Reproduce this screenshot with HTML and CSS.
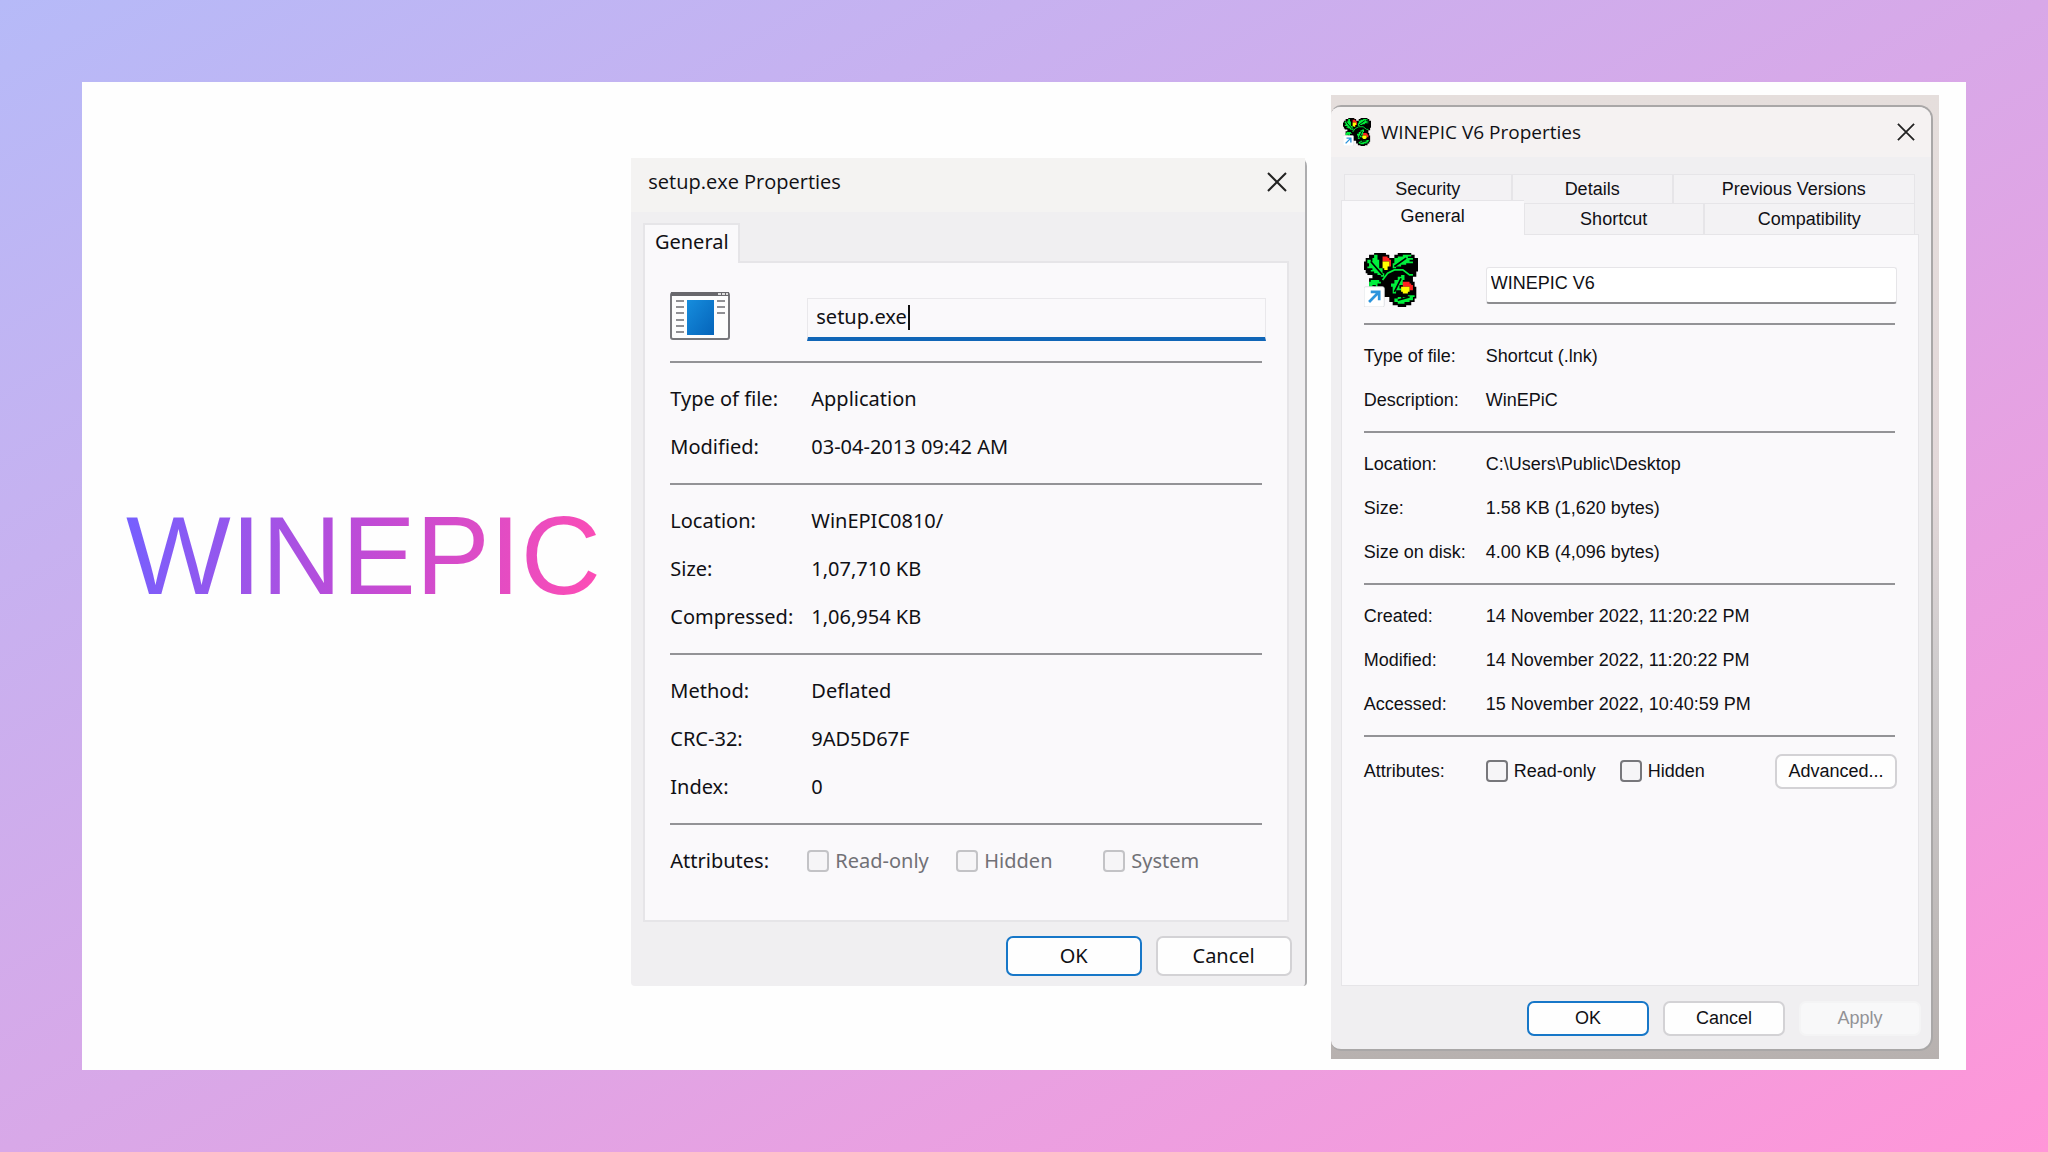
FILE: index.html
```html
<!DOCTYPE html>
<html lang="en">
<head>
<meta charset="utf-8">
<title>WINEPIC</title>
<link rel="stylesheet" href="styles.css">
</head>
<body>
<main class="slide">
  <h1 class="brand"><span>WINEPIC</span></h1>

  <section class="dialog setup">
    <header class="titlebar">
      <h2>setup.exe Properties</h2>
      <button class="close" type="button" aria-label="Close"><svg viewBox="0 0 20 20"><path d="M1 1L19 19M19 1L1 19"/></svg></button>
    </header>
    <div class="tabs"><button class="tab current" type="button">General</button></div>
    <div class="panel">
      <div class="group name">
        <svg class="file-icon" viewBox="0 0 60 48">
          <rect x="1" y="1" width="58" height="46" rx="2" fill="#fdfdfd" stroke="#77777b" stroke-width="2"/>
          <path d="M1 0H59V4H1Z" fill="#68686c"/>
          <path d="M48 2h3M52 2h3M56 2h2" stroke="#ddd" stroke-width="2"/>
          <path d="M6 9h8M6 15h8M6 21h8M6 28h8M6 34h8M6 40h8M47 9h8M47 15h8M47 21h8" stroke="#909094" stroke-width="2"/>
          <rect x="17" y="8" width="27" height="35" fill="url(#blue)"/>
          <defs><linearGradient id="blue" x1="0" y1="0" x2="1" y2="1"><stop stop-color="#168ddd"/><stop offset="1" stop-color="#0564ba"/></linearGradient></defs>
        </svg>
        <div class="field"><input type="text" value="setup.exe" aria-label="File name"><span class="caret"></span></div>
      </div>
      <dl class="group">
        <dt>Type of file:</dt><dd>Application</dd>
        <dt>Modified:</dt><dd>03-04-2013 09:42 AM</dd>
      </dl>
      <dl class="group">
        <dt>Location:</dt><dd>WinEPIC0810/</dd>
        <dt>Size:</dt><dd>1,07,710 KB</dd>
        <dt>Compressed:</dt><dd>1,06,954 KB</dd>
      </dl>
      <dl class="group">
        <dt>Method:</dt><dd>Deflated</dd>
        <dt>CRC-32:</dt><dd>9AD5D67F</dd>
        <dt>Index:</dt><dd>0</dd>
      </dl>
      <div class="group attributes">
        <span>Attributes:</span>
        <div class="checks">
          <label><input type="checkbox" disabled>Read-only</label>
          <label><input type="checkbox" disabled>Hidden</label>
          <label><input type="checkbox" disabled>System</label>
        </div>
      </div>
    </div>
    <footer class="actions">
      <button class="btn primary" type="button">OK</button>
      <button class="btn" type="button">Cancel</button>
    </footer>
  </section>

  <div class="backdrop">
    <section class="dialog shortcut">
      <header class="titlebar">
        <svg class="app-icon" viewBox="0 0 32 32"><use href="#berries"/></svg>
        <h2>WINEPIC V6 Properties</h2>
        <button class="close" type="button" aria-label="Close"><svg viewBox="0 0 20 20"><path d="M1 1L19 19M19 1L1 19"/></svg></button>
      </header>
      <div class="tabs back">
        <button class="tab" type="button">Security</button>
        <button class="tab" type="button">Details</button>
        <button class="tab" type="button">Previous Versions</button>
      </div>
      <div class="tabs front">
        <button class="tab current" type="button">General</button>
        <button class="tab" type="button">Shortcut</button>
        <button class="tab" type="button">Compatibility</button>
      </div>
      <div class="panel">
        <div class="group name">
          <svg class="file-icon" viewBox="0 0 32 32">
            <g id="berries">
              <path fill="#000" d="M3 1h3V0h7v1h2v2h3V1h2V0h8v1h2v2h2v8h-1v3h-2v3h1v3h1v7h-1v2h-2v2h-3v1h-5v-1h-3v-2h-2v-3H6v-6H3v-5h2v-2H2v-1H1v-2H0V5h1V3h2z"/>
              <g fill="#0c3">
                <path fill="#00f03c" d="M2 4h2v1h1V3h1V1h2v3h1v5h2v3h1v2h-2v-1H8v-1H6v-1H4v-1h1V9H2V8h1V6H2z"/>
                <path fill="#00f03c" d="M17 8V6h1V3h2V2h3V1h5v1h-2v1h3v1h-2v1h2v1h-4v1h-3v1h-3v1h-2z"/>
                <path fill="#00f03c" d="M17 24v-4h-1v-2h2v-2h2v-2h2v-1h2v3h-1v2h1v1h-3v2h1v1h-3v2z"/>
                <path fill="#00f03c" d="M18 28v-1h2v-1h2v1h1v-1h3v-1h4v1h-1v2h-2v1h-3v1h-4v-1h-2z"/>
                <path fill="#00f03c" d="M3 17h1v-1h5v1h1v1H8v2H7v-1H5v1H3z"/>
              </g>
              <path d="M4 5l7 8M18 8l7-5M18 23l4-8M20 28l7-2" stroke="#000" fill="none"/>
              <path d="M11 16l3-4 4-2h5l4 3h2" stroke="#00f03c" fill="none"/>
              <path fill="#f22" d="M11 2h3v1h1v1h1v4h-1V5h-4zM23 17h4v1h1v1h1v3h-2v-2h-4z"/>
              <path fill="#ff0" d="M11 5h4v3h-1v2h-2V9h-1zM22 20h5v3h-1v1h-3v-1h-1z"/>
              <rect x="0" y="20" width="12" height="12" rx="1" fill="#fff" stroke="#d8dce0" stroke-width=".5"/>
              <path d="M3 29l6-6M4 23h5v5" fill="none" stroke="#2c94dc" stroke-width="1.6"/>
            </g>
          </svg>
          <div class="field"><input type="text" value="WINEPIC V6" aria-label="Shortcut name"></div>
        </div>
        <dl class="group">
          <dt>Type of file:</dt><dd>Shortcut (.lnk)</dd>
          <dt>Description:</dt><dd>WinEPiC</dd>
        </dl>
        <dl class="group">
          <dt>Location:</dt><dd>C:\Users\Public\Desktop</dd>
          <dt>Size:</dt><dd>1.58 KB (1,620 bytes)</dd>
          <dt>Size on disk:</dt><dd>4.00 KB (4,096 bytes)</dd>
        </dl>
        <dl class="group">
          <dt>Created:</dt><dd>14 November 2022, 11:20:22 PM</dd>
          <dt>Modified:</dt><dd>14 November 2022, 11:20:22 PM</dd>
          <dt>Accessed:</dt><dd>15 November 2022, 10:40:59 PM</dd>
        </dl>
        <div class="group attributes">
          <span>Attributes:</span>
          <div class="checks">
            <label><input type="checkbox">Read-only</label>
            <label><input type="checkbox">Hidden</label>
          </div>
          <button class="btn" type="button">Advanced...</button>
        </div>
      </div>
      <footer class="actions">
        <button class="btn primary" type="button">OK</button>
        <button class="btn" type="button">Cancel</button>
        <button class="btn" type="button" disabled>Apply</button>
      </footer>
    </section>
  </div>
</main>
</body>
</html>
```
FILE: styles.css
```css
* { box-sizing: border-box; }

body {
  margin: 0;
  min-height: 100vh;
  padding: 82px;
  display: flex;
  background: linear-gradient(to bottom right, #b6baf8, #d8a8e8 50%, #ff96d8);
  color: #101014;
}

.slide {
  flex: 1;
  display: grid;
  grid-template-columns: 549fr 675fr 632fr 27fr;
  align-items: start;
  background: #fefefe;
}

.brand {
  align-self: center;
  margin: 0;
  padding: 0 0 40px 44px;
  font: 111px/128px "Liberation Sans", Arial, sans-serif;
}
.brand span {
  background: linear-gradient(100deg, #7460ff, #c04bd6 50%, #ff4db4);
  background-clip: text;
  color: transparent;
}

button, input { font: inherit; color: inherit; }

.dialog {
  display: flex;
  flex-direction: column;
  background: #f0eff1;
}

.titlebar {
  display: flex;
  align-items: center;
  background: #f4f3f2;
}
.titlebar h2 {
  flex: 1;
  margin: 0;
  font-family: "Open Sans", "Noto Sans", sans-serif;
  font-weight: 400;
}
.close {
  display: flex;
  padding: 0;
  border: 0;
  background: none;
}
.close svg {
  width: 20px;
  height: 20px;
  fill: none;
  stroke: #222;
  stroke-width: 2;
}

.tabs { display: flex; }
.tab {
  padding: 0;
  border: 1px solid #e6e5e8;
  border-bottom: 0;
  background: #f3f2f4;
}
.tab.current { background: #faf9fb; }

.panel {
  border: 2px solid #e6e5e8;
  background: #faf9fb;
}

.group {
  margin: 0;
  display: grid;
}
.group + .group { border-top: 2px solid #939396; }
.group dd { margin: 0; }

.name { align-items: start; }
.file-icon { display: block; }
.field { display: flex; align-items: center; }
.field input {
  padding: 0;
  border: 0;
  outline: 0;
  background: none;
}

.attributes { align-items: center; }
.checks { display: grid; }
.checks label { display: flex; align-items: center; gap: 6px; }
.checks input {
  appearance: none;
  width: 22px;
  height: 22px;
  margin: 0;
  border: 2px solid #77777b;
  border-radius: 4px;
  background: #f6f5f7;
}
.checks input:disabled { border-color: #c3c3c6; }
.checks label:has(:disabled) { color: #717176; }

.actions { display: flex; justify-content: flex-end; }
.btn {
  padding: 0;
  border: 2px solid #d3d2d5;
  border-radius: 7px;
  background: #fefefe;
}
.btn.primary { border-color: #1777c8; }
.btn:disabled { border-color: #f4f4f5; background: #f8f8f9; color: #929296; }

/* Archive entry dialog */
.setup {
  margin-top: 76px;
  font: 20px/48px "Noto Sans", "Open Sans", sans-serif;
  border-right: 2px solid #adadaf;
  border-radius: 4px 8px 4px 4px;
}
.setup .titlebar { height: 54px; padding: 0 18px 6px 17px; }
.setup .titlebar h2 { font-size: 20px; }
.setup .tabs { padding: 11px 0 0 12px; }
.setup .tab {
  width: 97px;
  height: 40px;
  margin-bottom: -2px;
  line-height: 34px;
  padding-bottom: 4px;
  border-width: 2px;
  border-bottom: 0;
  position: relative;
}
.setup .panel { margin: 0 16px 0 12px; padding: 29px 25px 23px; }
.setup .group { grid-template-columns: 141px 1fr; padding: 12px 0; }
.setup .name { padding: 0 0 20px; grid-template-columns: 137px 1fr; }
.setup .file-icon { width: 60px; height: 48px; }
.setup .field {
  margin: 6px -4px 0 0;
  height: 43px;
  padding: 0 0 2px 8px;
  border: 1px solid #e9e8eb;
  border-bottom: 4px solid #1066b7;
}
.setup .field input { width: 92px; }
.setup .caret { width: 2px; height: 25px; background: #111; }
.setup .attributes { grid-template-columns: 137px 1fr; }
.setup .checks { grid-template-columns: 149px 147px 1fr; }
.setup .actions { gap: 14px; padding: 14px 13px 10px; }
.setup .btn { width: 136px; height: 40px; line-height: 36px; }

/* Desktop shortcut dialog */
.backdrop {
  margin: 13px 0 0 24px;
  padding: 10px 6px 8px 0;
  background: linear-gradient(to bottom, #e5dedc, #e3d8d9 40%, #cfcccd 60%, #b7b1af);
}
.shortcut {
  border: solid #a9a7a7;
  border-width: 2px 2px 2px 0;
  border-radius: 10px 14px 14px 10px;
  font: 18px/44px "Liberation Sans", Arial, sans-serif;
  overflow: hidden;
}
.shortcut .titlebar { height: 50px; padding: 0 16px 0 12px; background: #f5f2f2; }
.shortcut .titlebar h2 { font-size: 19px; padding-left: 10px; }
.shortcut .close svg { width: 18px; height: 18px; }
.app-icon { width: 28px; height: 28px; }
.shortcut .tab { line-height: 28px; }
.shortcut .back { display: grid; grid-template-columns: 168px 161px 1fr; margin: 17px 16px 0 13px; }
.shortcut .back .tab { height: 29px; }
.shortcut .front { display: grid; grid-template-columns: 183px 180px 1fr; margin: 0 16px 0 10px; align-items: end; }
.shortcut .front .tab { height: 31px; }
.shortcut .front .tab.current { height: 35px; margin: -3px 0 -1px; line-height: 30px; position: relative; border-right: 0; padding-bottom: 4px; }
.shortcut .panel { margin: 0 12px 0 10px; padding: 18px 23px 0 22px; border-width: 1px; min-height: 752px; }
.shortcut .group { grid-template-columns: 122px 1fr; padding: 9px 0; }
.shortcut .name { padding: 0 0 16px; }
.shortcut .file-icon { width: 54px; height: 54px; }
.shortcut .field {
  margin: 14px -2px 0 0;
  height: 37px;
  padding: 0 4px 4px;
  border: 1px solid #e6e5e8;
  border-bottom: 2px solid #8d8d90;
  border-radius: 3px;
  background: #fff;
}
.shortcut .field input { width: 100%; }
.shortcut .attributes { grid-template-columns: 122px 1fr 120px; padding: 12px 0; }
.shortcut .checks { grid-template-columns: 134px 1fr; }
.shortcut .actions { gap: 14px; padding: 15px 10px 13px; }
.shortcut .btn { width: 122px; height: 35px; line-height: 31px; }
```
